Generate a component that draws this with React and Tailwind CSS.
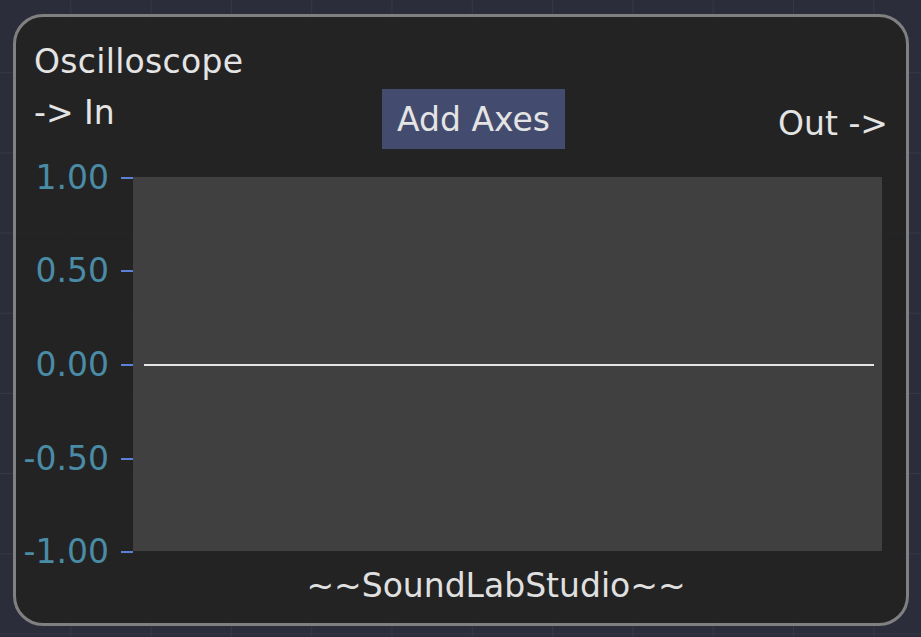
const ticks = [
  { label: "1.00", top: 0 },
  { label: "0.50", top: 93 },
  { label: "0.00", top: 187 },
  { label: "-0.50", top: 281 },
  { label: "-1.00", top: 374 },
];

export default function App() {
  return (
    <div
      className="h-[637px] w-[921px] overflow-hidden bg-[#2c2d3a] pl-[13px] pt-[14px]"
      style={{
        fontFamily: '"DejaVu Sans", "Liberation Sans", sans-serif',
        backgroundImage:
          "linear-gradient(to right, #373845 1px, transparent 1px), linear-gradient(to bottom, #373845 1px, transparent 1px)",
        backgroundSize: "80.3px 80.2px",
        backgroundPosition: "-10px -8px",
      }}
    >
      <div className="flex h-[612px] w-[896px] flex-col rounded-[30px] border-[3px] border-[#808080] bg-[#222222]/90 text-[#e4e4e4]">
        {/* title */}
        <div className="pl-[18px] pt-[25px] text-[33px] leading-[40px] tracking-[0.3px]">Oscilloscope</div>

        {/* ports + button */}
        <div className="mt-[7px] flex h-[60px] items-start">
          <div className="w-[366px] pl-[18px] pt-[4px] text-[33px] leading-[40px]">-&gt; In</div>
          <button className="h-[60px] w-[183px] bg-[#434b6e] pt-[2px] text-[33px] leading-[40px] text-[#e4e4e4]">
            Add Axes
          </button>
          <div className="flex-1 pr-[18px] pt-[15px] text-right text-[33px] leading-[40px]">Out -&gt;</div>
        </div>

        {/* chart */}
        <div className="mt-[28px] flex">
          <div className="relative h-[374px] w-[117px] shrink-0">
            {ticks.map((t) => (
              <div
                key={t.label}
                className="absolute right-0 flex -translate-y-1/2 items-center"
                style={{ top: t.top + 1 }}
              >
                <span className="text-[33px] leading-[40px] text-[#4a8ba6]">{t.label}</span>
                <span className="ml-[12px] h-[2px] w-[12px] bg-[#5b80d9]" />
              </div>
            ))}
          </div>
          <div className="relative h-[374px] w-[749px] bg-[#404040]">
            <div className="absolute left-[11px] right-[8px] top-[187px] h-[2px] bg-[#e6e6e6]" />
          </div>
        </div>

        {/* footer */}
        <div className="mt-[15px] pl-[70px] text-center text-[33px] leading-[40px] text-[#e0e0e0]">
          ~~SoundLabStudio~~
        </div>
      </div>
    </div>
  );
}
